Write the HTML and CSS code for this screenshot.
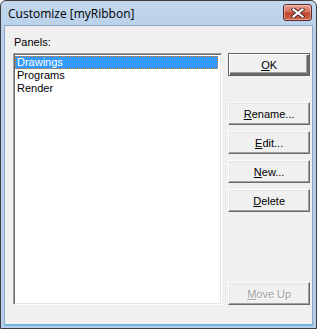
FILE: index.html
```html
<!DOCTYPE html>
<html lang="en">
<head>
  <meta charset="UTF-8">
  <title>Customize [myRibbon]</title>
  <link rel="stylesheet" href="styles.css">
</head>
<body>
  <div class="window">
    <div class="titlebar">
      <span class="title">Customize [myRibbon]</span>
      <div class="close-btn">
        <svg width="14" height="10" viewBox="0 0 14 10">
          <path d="M2.5 1.5 L11.5 8.5 M11.5 1.5 L2.5 8.5" stroke="#4a2424" stroke-width="4" stroke-linecap="square"/>
          <path d="M2.5 1.5 L11.5 8.5 M11.5 1.5 L2.5 8.5" stroke="#ffffff" stroke-width="2.2" stroke-linecap="square"/>
        </svg>
      </div>
    </div>
    <div class="client">
      <div class="left-col">
        <div class="label">Panels:</div>
        <div class="listbox">
          <div class="item selected">Drawings</div>
          <div class="item">Programs</div>
          <div class="item">Render</div>
        </div>
      </div>
      <div class="right-col">
        <button class="btn default"><u>O</u>K</button>
        <button class="btn first-group"><u>R</u>ename...</button>
        <button class="btn"><u>E</u>dit...</button>
        <button class="btn"><u>N</u>ew...</button>
        <button class="btn"><u>D</u>elete</button>
        <button class="btn disabled"><u>M</u>ove Up</button>
      </div>
    </div>
  </div>
</body>
</html>
```
FILE: styles.css
```css
body { margin: 0; font-family: "Liberation Sans", Arial, sans-serif; font-size: 11px; }
.window { width: 317px; height: 329px; box-sizing: border-box; border: 1px solid #3c3c3c; border-radius: 6px 6px 0 0; background: linear-gradient(#c3d8ee, #b8d0ea 30px, #b5cde8); display: flex; flex-direction: column; padding: 0 3px 2px 3px; }
.titlebar { height: 24px; display: flex; align-items: center; position: relative; }
.title { font-family: "Open Sans", "DejaVu Sans", sans-serif; font-size: 12px; color: #000; padding-left: 4px; margin-top: 1px; }
.close-btn { position: absolute; right: 1px; top: 3px; width: 29px; height: 17px; box-sizing: border-box; border: 1px solid #5e2b2b; border-radius: 3px; background: linear-gradient(#e8a493, #d3705c 45%, #c2452c 55%, #cd6b50); display: flex; align-items: center; justify-content: center; box-shadow: inset 0 0 0 1px rgba(255,255,255,0.35); }
.client { flex: 1; background: #f0f0f0; border: 1px solid #8fa8c6; border-bottom: 2px solid #6fb3e0; display: flex; padding: 10px 2px 19px 8px; gap: 6px; }
.left-col { display: flex; flex-direction: column; width: 210px; }
.label { line-height: 13px; margin-bottom: 4px; padding-left: 1px; }
.listbox { flex: 1; background: #fff; border: 1px solid; border-color: #a0a0a0 #fff #fff #a0a0a0; box-shadow: inset 1px 1px #696969, inset -1px -1px #e3e3e3; padding: 2px 3px 2px 1px; }
.item { height: 13px; line-height: 13px; padding-left: 2px; color: #000; }
.item.selected { background: #3399ff; color: #fff; background-image: repeating-linear-gradient(90deg, #e07a20 0 1px, transparent 1px 2px), repeating-linear-gradient(90deg, #e07a20 0 1px, transparent 1px 2px), repeating-linear-gradient(0deg, #e07a20 0 1px, transparent 1px 2px), repeating-linear-gradient(0deg, #e07a20 0 1px, transparent 1px 2px); background-size: 100% 1px, 100% 1px, 1px 100%, 1px 100%; background-position: top, bottom, left, right; background-repeat: no-repeat; }
.right-col { display: flex; flex-direction: column; width: 82px; padding-top: 17px; gap: 6px; }
.btn { height: 23px; font-family: inherit; font-size: 11px; color: #000; background: #f0f0f0; border: 1px solid; border-color: #fff #696969 #696969 #fff; box-shadow: inset -1px -1px #a0a0a0, inset 1px 1px #e3e3e3; padding: 0; }
.btn.default { border: 1px solid #646464; box-shadow: inset 1px 1px #fff, inset -2px -2px #696969, inset -3px -3px #a0a0a0; }
.btn.first-group { margin-top: 20px; }
.btn.disabled { margin-top: auto; color: #a0a0a0; text-shadow: 1px 1px #fff; }
```
